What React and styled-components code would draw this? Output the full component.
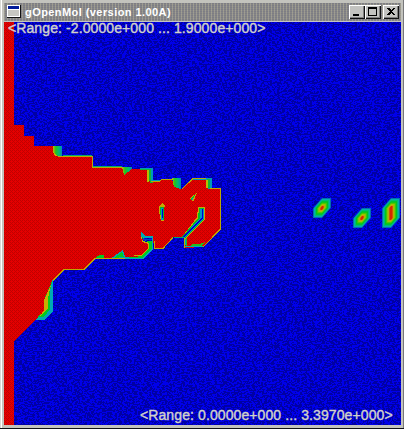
import React from "react";
import styled, { createGlobalStyle } from "styled-components";

const Global = createGlobalStyle`
  * { box-sizing: border-box; }
  body { margin: 0; overflow: hidden; background: #c3c3c3; }
`;

const Frame = styled.main`
  width: 404px;
  height: 429px;
  padding: 3px 3px 3px 4px;
  display: flex;
  flex-direction: column;
  background: #c3c3bd;
  border-bottom: 1px solid #101018;
  box-shadow: inset 1px 0 #d8d8d4, inset 2px 0 #fff, inset -1px 0 #77777a;
  font-family: "Liberation Sans", Arial, sans-serif;
`;

const TitleBar = styled.header`
  height: 19px;
  flex: none;
  display: flex;
  align-items: center;
  padding: 0 2px 1px 3px;
  border-bottom: 1px solid #c3c3c3;
  background-color: #8b8b86;
  background-image:
    repeating-linear-gradient(90deg, #b5b09a66 0 1px, #70708066 1px 3px),
    repeating-linear-gradient(0deg, #a5a59555 0 1px, #7b7b8855 1px 2px);
`;

const Title = styled.h1`
  flex: 1;
  margin: 0 0 0 4px;
  font-size: 11px;
  line-height: 16px;
  font-weight: 700;
  letter-spacing: ${({ $tracking }) => $tracking}px;
  color: #fff;
  white-space: nowrap;
`;

const Controls = styled.div`
  display: flex;
`;

const ControlButton = styled.button`
  width: 16px;
  height: 14px;
  padding: 0;
  margin-left: ${({ $gap }) => ($gap ? 2 : 0)}px;
  border: 0;
  background: #c3c3c0;
  box-shadow: inset 1px 1px #fff, inset -1px -1px #111, inset -2px -2px #808080;
  display: flex;
`;

const Client = styled.section`
  width: 397px;
  height: 403px;
  position: relative;
`;

const Plot = styled.svg`
  display: block;
  width: 397px;
  height: 403px;
`;

const RangeLabel = styled.div`
  position: absolute;
  left: ${({ $x }) => $x}px;
  top: ${({ $y }) => $y}px;
  font-size: 14px;
  line-height: 13px;
  letter-spacing: ${({ $tracking }) => $tracking}px;
  color: #d2d2ca;
  -webkit-text-stroke: 0.4px #d2d2ca;
  white-space: nowrap;
`;

const DATA =
  "M4 22H14V125H24V136H34V146H53L54 152L58 156H92V167H122L124 175L132 169H148L150 181H159L162 179H172L174 186L182 189L193 178H208L210 188H221V229L203 247L184 248V238L203 219V207H198V217L183 237H173L163 248H154L153 238H143L142 231L141 236L144 242H150V248L143 257H125L123 251L115 258H104L100 255L95 258L84 269H64L53 280L52 285L45 300L44 311L35 320L14 341V425H4Z";

// Patches shaded from warm on the left to cool on the right.
const SHADED = [
  "M53 146H62V156H58L53 152Z",
  "M122 167H132L132 169L124 175Z",
  "M172 178H181V189L174 187Z",
];

// Flat transition bands, painted in order from cool to warm.
const BANDS = [
  ["#0099b8", "M132 168H153V180H163L150 182L148 169Z M193 178H212V189H208V180H193Z"],
  ["#10b535", "M133 169H151V181H160L150 183L147 170Z M207 179H210V188H207Z"],
  ["#b8bd00", "M147 170H149V182H147Z M206 180H208V188H206Z"],
  ["#00a9b5", "M53 279V311L44 320H35L44 312V300Z M123 250L125 257H143L152 248V238H141V231L145 236H153V249L143 259H110Z"],
  ["#00cc22", "M52 281L50 292V309L44 317H37L44 312V300Z M114 258L122 252L124 257Z M142 236L146 241H152V248L143 258H125L142 256L149 248V243L142 238Z M95 258L100 255H104V258Z"],
  ["#c6b000", "M51 285L48 298V309L40 316L44 310V300Z M53 152L58 156H55Z M141 236L143 241L149 243V248L142 256H126L141 255L148 248V244L142 242Z"],
  ["#0045c8", "M143 239H152V240H143Z"],
  ["#00b5a8", "M184 238H186V245H184ZM184 247H203L220 230V229L203 246H184Z"],
  ["#20c01c", "M186 238H187V246H186ZM186 246H202L205 242L200 244H193L190 246Z"],
];

const HOLES = [
  ["#c6a900", "M159 207L162 203L165 206L164 209V221H161L159 211Z M190 198L197 193L193 202Z M198 207H205V219L186 239L182 237L197 217Z"],
  ["#00bb28", "M160 207H164V220H161L160 210Z M191 198L195 195L192 201Z M199 208H204V219L185 239L182 237L198 218Z"],
  ["#0099c5", "M161 208H163V220H161Z M192 198H193V200H192Z M200 209H204V218L185 238L183 237L200 218Z"],
  ["#0000cd", "M162 209H163V218H162Z M202 209H203V218L184 238L183 237L202 217Z"],
];

// Half width, half height and colour of each contour, from the rim inward.
const RINGS = [
  [9, 10, "#006fae"],
  [8, 9, "#00adb0"],
  [7, 8, "#00bd70"],
  [6, 6.8, "#00c51d"],
  [4.7, 5.2, "#50c900"],
  [3.7, 4, "#a0c400"],
  [2.6, 3, "#c9a000"],
  [1.6, 1.9, "#d42800"],
];

function Spot({ x, y, tall = 0 }) {
  return (
    <g>
      {RINGS.map(([w, h, c]) => {
        const v = h + tall;
        return (
          <path
            key={c}
            fill={c}
            d={`M${x - w} ${y - v + w * 1.15}L${x} ${y - v}H${x + w}V${y + v - w * 1.15}L${x} ${y + v}H${x - w}Z`}
          />
        );
      })}
    </g>
  );
}

function Field() {
  return (
    <Plot viewBox="4 22 397 403">
      <defs>
        <filter id="grain" filterUnits="userSpaceOnUse" x="4" y="22" width="397" height="403" colorInterpolationFilters="sRGB">
          <feTurbulence type="fractalNoise" baseFrequency=".4 .7" numOctaves="2" seed="4" />
          <feColorMatrix values="0 0 0 0 0  0 0 0 0 0  0 0 0 0 0  1 0 0 0 0" />
          <feComponentTransfer>
            <feFuncA type="discrete" tableValues="0 0 0 0 0 .3 .3 .3 .3 .3" />
          </feComponentTransfer>
        </filter>
        <pattern id="weave" width="4" height="4" patternUnits="userSpaceOnUse">
          <path fill="#c00000" d="M0 0H1V1H0ZM2 0H3V1H2ZM1 1H2V2H1ZM0 2H1V3H0ZM2 2H3V3H2ZM3 3H4V4H3Z" shapeRendering="crispEdges" />
        </pattern>
        <linearGradient id="cooling">
          <stop offset="0" stopColor="#c6b800" />
          <stop offset=".3" stopColor="#20c41c" />
          <stop offset=".65" stopColor="#00bd70" />
          <stop offset="1" stopColor="#0088b8" />
        </linearGradient>
      </defs>
      <path fill="#0000ea" d="M4 22H401V425H4Z" />
      <rect x="4" y="22" width="397" height="403" filter="url(#grain)" />
      <g shapeRendering="crispEdges">
        <path fill="#e40000" d={DATA} />
        <path fill="url(#weave)" d={DATA} />
        {SHADED.map((d) => <path key={d} fill="url(#cooling)" d={d} />)}
        {BANDS.map(([fill, d]) => <path key={fill} fill={fill} d={d} />)}
        {HOLES.map(([fill, d]) => <path key={fill} fill={fill} d={d} />)}
        <path fill="none" stroke="#bba900" d="M58 156.5H92.5V167.5H122M151 181.5H159L162 179.5H172M182 189L193 178.5H206M210 188.5H220.5V229L203 247M84 269.5H64L53 280.5M84 269.5L95 258.5H125M173 237.5L163 248.5H154V241M184.5 238V248" />
        <path stroke="#00a970" d="M63 155.5H92M93 166.5H122M174 237.5H184" />
      </g>
      <Spot x={322} y={208} />
      <Spot x={362} y={218} />
      <Spot x={391} y={213} tall={5} />
    </Plot>
  );
}

export default function App() {
  return (
    <>
      <Global />
      <Frame>
        <TitleBar>
          <svg width="14" height="13" viewBox="0 0 14 13" shapeRendering="crispEdges">
            <path fill="#111" d="M0 0H14V13H0Z" />
            <path fill="#fff" d="M0 0H13V12H0Z" />
            <path fill="#001b9a" d="M1 1H12V4H1Z" />
            <path fill="#c7c7c2" d="M1 5H12V11H1Z" />
          </svg>
          <Title $tracking={0.43}>gOpenMol (version 1.00A)</Title>
          <Controls>
            <ControlButton aria-label="Minimize">
              <svg width="16" height="14"><path fill="#000" d="M4 9H10V11H4Z" /></svg>
            </ControlButton>
            <ControlButton aria-label="Maximize">
              <svg width="16" height="14" shapeRendering="crispEdges"><path fill="#000" fillRule="evenodd" d="M3 2H12V11H3ZM4 4V10H11V4Z" /></svg>
            </ControlButton>
            <ControlButton $gap aria-label="Close">
              <svg width="16" height="14" shapeRendering="crispEdges"><path fill="#000" d="M4 3H6L8 5L10 3H12L9 6.5L12 10H10L8 8L6 10H4L7 6.5Z" /></svg>
            </ControlButton>
          </Controls>
        </TitleBar>
        <Client>
          <Field />
          <RangeLabel $x={4} $y={0} $tracking={0.1}>&lt;Range: -2.0000e+000 ... 1.9000e+000&gt;</RangeLabel>
          <RangeLabel $x={136} $y={387} $tracking={0.1}>&lt;Range: 0.0000e+000 ... 3.3970e+000&gt;</RangeLabel>
        </Client>
      </Frame>
    </>
  );
}
